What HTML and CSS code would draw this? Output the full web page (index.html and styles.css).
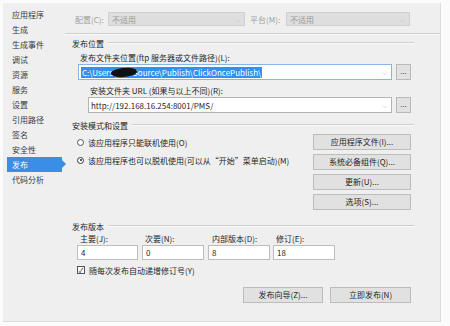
FILE: index.html
```html
<!DOCTYPE html>
<html lang="zh">
<head>
<meta charset="utf-8">
<link rel="stylesheet" href="styles.css">
</head>
<body>
<div class="frame">
  <nav class="side">
    <div class="item">应用程序</div>
    <div class="item">生成</div>
    <div class="item">生成事件</div>
    <div class="item">调试</div>
    <div class="item">资源</div>
    <div class="item">服务</div>
    <div class="item">设置</div>
    <div class="item">引用路径</div>
    <div class="item">签名</div>
    <div class="item">安全性</div>
    <div class="item active">发布</div>
    <div class="item">代码分析</div>
  </nav>
  <main class="main">
    <div class="cfg">
      <span class="cfg-lbl w1">配置(C):</span>
      <div class="dsel s1"><span>不适用</span><span class="arr">⌵</span></div>
      <span class="cfg-lbl w2">平台(M):</span>
      <div class="dsel s2"><span>不适用</span><span class="arr">⌵</span></div>
    </div>
    <div class="rule"></div>

    <div class="gh g1"><span>发布位置</span><i></i></div>
    <div class="lbl l1">发布文件夹位置(ftp 服务器或文件路径)(L):</div>
    <div class="irow r1">
      <div class="combo focus"><span class="sel">C:\Users\<b class="blot"></b>Source\Publish\ClickOncePublish\</span><span class="arr">⌵</span></div>
      <div class="dots">...</div>
    </div>
    <div class="lbl l2">安装文件夹 URL (如果与以上不同)(R):</div>
    <div class="irow r2">
      <div class="combo"><span>http://192.168.16.254:8001/PMS/</span><span class="arr">⌵</span></div>
      <div class="dots">...</div>
    </div>

    <div class="gh g2"><span>安装模式和设置</span><i></i></div>
    <div class="mode">
      <div class="radios">
        <div class="radio"><span class="rb"></span>该应用程序只能联机使用(O)</div>
        <div class="radio"><span class="rb on"></span>该应用程序也可以脱机使用(可以从“开始”菜单启动)(M)</div>
      </div>
      <div class="btns">
        <div class="btn">应用程序文件(I)...</div>
        <div class="btn">系统必备组件(Q)...</div>
        <div class="btn">更新(U)...</div>
        <div class="btn last">选项(S)...</div>
      </div>
    </div>

    <div class="gh g3"><span>发布版本</span><i></i></div>
    <div class="vlbls">
      <span class="v1">主要(J):</span>
      <span class="v2">次要(N):</span>
      <span class="v3">内部版本(D):</span>
      <span class="v4">修订(E):</span>
    </div>
    <div class="vins">
      <div class="vin a">4</div>
      <div class="vin b">0</div>
      <div class="vin c">8</div>
      <div class="vin d">18</div>
    </div>
    <div class="chk"><span class="cb">✓</span>随每次发布自动递增修订号(Y)</div>
    <div class="bottom">
      <div class="btn wiz">发布向导(Z)...</div>
      <div class="btn now">立即发布(N)</div>
    </div>
  </main>
</div>
</body>
</html>
```
FILE: styles.css
```css
html, body { margin: 0; padding: 0; background: #fbfbfb; }
body {
  width: 450px; height: 326px; overflow: hidden;
  font-family: "Noto Sans CJK SC", "Noto Sans", sans-serif;
  font-size: 8px; color: #262626;
}
.frame {
  margin: 3px 0 0 3px;
  width: 437px; height: 318px;
  background: #efefef;
  border-right: 1px solid #dcdcdc;
  border-bottom: 1px solid #dcdcdc;
  display: flex;
}
.side { width: 62px; padding-top: 4px; box-sizing: border-box; flex: none; }
.item {
  height: 15px; line-height: 15px;
  margin-left: 4px; width: 55px; padding-left: 5px; box-sizing: border-box;
  position: relative; color: #3a3a3a;
}
.item.active { background: #3a8ee6; color: #fff; }
.item.active::after {
  content: ""; position: absolute; right: -4px; top: 3px;
  border-left: 4px solid #3a8ee6; border-top: 4.5px solid transparent; border-bottom: 4.5px solid transparent;
}
.main { flex: 1; display: flex; flex-direction: column; }
.cfg { display: flex; align-items: center; margin-top: 9px; height: 14px; margin-left: 10px; }
.cfg-lbl { color: #a0a0a0; }
.w1 { width: 33px; }
.w2 { width: 36px; margin-left: 5px; }
.dsel {
  height: 14px; box-sizing: border-box; background: #dedede; border: 1px solid #d0d0d0;
  display: flex; align-items: center; justify-content: space-between; padding: 0 4px 0 3px;
  color: #9a9a9a;
}
.s1 { width: 137px; }
.s2 { width: 124px; }
.arr { font-size: 7px; color: #999; line-height: 1; }
.rule { margin-top: 7px; height: 1px; background: #cfcfcf; border-bottom: 1px solid #fafafa; }
.gh { display: flex; align-items: center; height: 10px; margin-left: 7px; margin-right: 26px; }
.gh span { white-space: nowrap; }
.gh i { flex: 1; height: 1px; background: #cfcfcf; border-bottom: 1px solid #fafafa; margin-left: 4px; }
.g1 { margin-top: 3px; }
.lbl { height: 10px; line-height: 10px; white-space: nowrap; }
.l1 { margin-top: 5px; margin-left: 15px; }
.l2 { margin-top: 6px; margin-left: 25px; }
.irow { display: flex; height: 16px; margin-top: 1px; }
.r1 { margin-left: 13px; }
.r2 { margin-left: 23px; }
.combo {
  box-sizing: border-box; height: 16px; background: #fff; border: 1px solid #b4b4b4;
  display: flex; align-items: center; justify-content: space-between; padding: 0 4px 0 2px;
}
.r1 .combo { width: 314px; border-color: #87b6e6; }
.r2 .combo { width: 304px; }
.sel { background: #3390f0; color: #fff; padding: 0 1px; line-height: 11px; display: flex; align-items: center; }
.blot { display: inline-block; width: 26px; height: 9px; background: #111; border-radius: 50% 45% 55% 50%; margin: 0 -4px 0 -5px; transform: rotate(-4deg); }
.combo .arr { color: #777; }
.dots {
  margin-left: 4px; width: 15px; height: 16px; box-sizing: border-box;
  background: #e1e1e1; border: 1px solid #b9b9b9; text-align: center; line-height: 11px; color: #555;
}
.g2 { margin-top: 7px; }
.mode { display: flex; height: 81px; }
.radios { flex: 1; padding-top: 7px; margin-left: 12px; }
.radio { display: flex; align-items: center; height: 10px; margin-bottom: 8px; white-space: nowrap; }
.rb {
  width: 7px; height: 7px; border: 1px solid #555; border-radius: 50%; background: #fff;
  margin-right: 4px; box-sizing: border-box; position: relative;
}
.rb.on::after { content: ""; position: absolute; left: 1.5px; top: 1.5px; width: 2px; height: 2px; border-radius: 50%; background: #222; }
.rb.on { border-color: #333; }
.btns { width: 98px; margin-right: 29px; padding-top: 4px; }
.btn {
  height: 16px; box-sizing: border-box; background: #e1e1e1; border: 1px solid #bcbcbc;
  text-align: center; line-height: 14px; margin-bottom: 4px; white-space: nowrap;
}
.btn.last { margin-top: 1px; }
.g3 { margin-top: 10px; }
.vlbls { display: flex; height: 10px; line-height: 10px; margin-top: 3px; margin-left: 15px; }
.vlbls span { white-space: nowrap; }
.v1 { width: 65px; } .v2 { width: 67px; } .v3 { width: 64px; }
.vins { display: flex; margin-top: 1px; margin-left: 12px; height: 15px; }
.vin {
  box-sizing: border-box; height: 15px; background: #fff; border: 1px solid #bdbdbd;
  padding-left: 3px; line-height: 13px;
}
.vin.a { width: 61px; }
.vin.b { width: 62px; margin-left: 4px; }
.vin.c { width: 62px; margin-left: 4px; }
.vin.d { width: 62px; margin-left: 3px; }
.chk { display: flex; align-items: center; height: 10px; margin-top: 5px; margin-left: 12px; white-space: nowrap; }
.cb {
  width: 8px; height: 8px; box-sizing: border-box; border: 1px solid #555; background: #fff;
  font-size: 7px; line-height: 6px; text-align: center; margin-right: 4px; color: #222;
}
.bottom { display: flex; margin-top: 12px; margin-left: 178px; }
.bottom .btn { margin: 0; }
.wiz { width: 80px; }
.now { width: 81px; margin-left: 7px !important; }
```
